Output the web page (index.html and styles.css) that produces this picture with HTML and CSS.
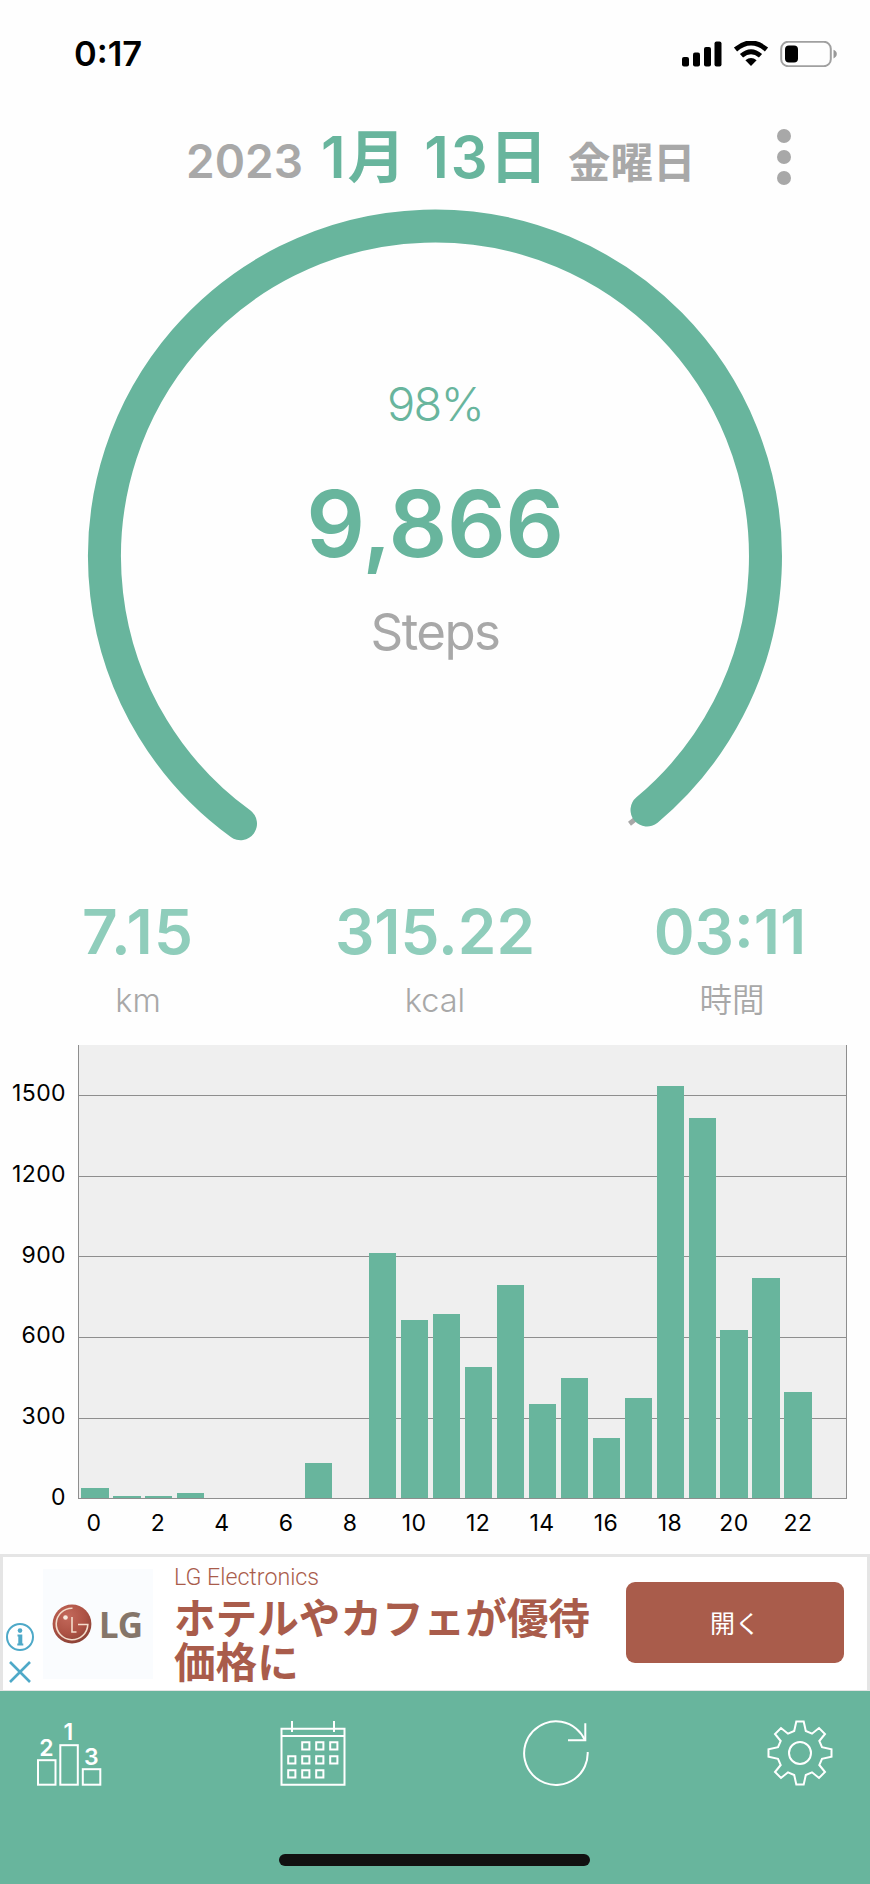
FILE: index.html
```html
<!DOCTYPE html>
<html lang="ja">
<head>
    <meta charset="UTF-8">
    <meta name="viewport" content="width=device-width, initial-scale=1.0">
    <title>Steps</title>
    <link rel="stylesheet" href="styles.css">
</head>
<body>
    <div class="statusbar">
        <span class="clock">0:17</span>
        <svg class="status-icons" width="156" height="26" viewBox="0 0 156 26">
            <rect x="0" y="16" width="7" height="9.5" rx="2"/>
            <rect x="11" y="11.5" width="7" height="14" rx="2"/>
            <rect x="22" y="6" width="7" height="19.5" rx="2"/>
            <rect x="32.5" y="0.5" width="7" height="25" rx="2"/>
            <path d="M53.5 8.5Q69 -4.5 84.5 8.5" fill="none" stroke="#000" stroke-width="5"/>
            <path d="M59.5 14.8Q69 6.5 78.5 14.8" fill="none" stroke="#000" stroke-width="4.8"/>
            <path d="M63.4 19.2Q69 15 74.6 19.2L69 25z"/>
            <rect x="99.2" y="0.8" width="49.6" height="24.4" rx="7" fill="none" stroke="#a0a0a0" stroke-width="2"/>
            <rect x="103" y="4.5" width="13" height="17" rx="4"/>
            <path d="M151.5 8.8Q154.8 10 154.8 13T151.5 17.4z" fill="#999"/>
        </svg>
    </div>

    <div class="date-row">
        <span class="year">2023</span>
        <span class="day">1月 13日</span>
        <span class="weekday">金曜日</span>
        <svg class="more" width="14" height="56" viewBox="0 0 14 56">
            <circle cx="7" cy="7" r="7"/>
            <circle cx="7" cy="28" r="7"/>
            <circle cx="7" cy="49" r="7"/>
        </svg>
    </div>

    <div class="gauge">
        <svg class="ring" width="700" height="640" viewBox="85 207 700 640">
            <path d="M240.5 823.7A330.5 330.5 0 1 1 629.5 823.7" stroke="#a8a8a8" stroke-width="5"/>
            <path d="M240.5 823.7A330.5 330.5 0 1 1 647 810" stroke="#68b59d" stroke-width="33" stroke-linecap="round"/>
        </svg>
        <div class="percent">98%</div>
        <div class="steps">9,866</div>
        <div class="steps-label">Steps</div>
    </div>

    <div class="stats">
        <div class="stat"><div class="value">7.15</div><div class="unit">km</div></div>
        <div class="stat"><div class="value">315.22</div><div class="unit">kcal</div></div>
        <div class="stat"><div class="value">03:11</div><div class="unit">時間</div></div>
    </div>

    <div class="chart">
        <div class="y-axis">
            <span>1500</span><span>1200</span><span>900</span><span>600</span><span>300</span><span>0</span>
        </div>
        <div class="plot">
            <div class="lines"><i></i><i></i><i></i><i></i><i></i></div>
            <div class="bars">
                <b style="height:10.5px"></b>
                <b style="height:2.5px"></b>
                <b style="height:2px"></b>
                <b style="height:5.5px"></b>
                <b style="height:0"></b>
                <b style="height:0"></b>
                <b style="height:0"></b>
                <b style="height:35px"></b>
                <b style="height:0"></b>
                <b style="height:245px"></b>
                <b style="height:178px"></b>
                <b style="height:184px"></b>
                <b style="height:131.5px"></b>
                <b style="height:213px"></b>
                <b style="height:94px"></b>
                <b style="height:120px"></b>
                <b style="height:60px"></b>
                <b style="height:100px"></b>
                <b style="height:412px"></b>
                <b style="height:380px"></b>
                <b style="height:168.5px"></b>
                <b style="height:220px"></b>
                <b style="height:106px"></b>
                <b style="height:0"></b>
            </div>
        </div>
        <div class="x-axis">
            <span>0</span><span>2</span><span>4</span><span>6</span><span>8</span><span>10</span>
            <span>12</span><span>14</span><span>16</span><span>18</span><span>20</span><span>22</span>
        </div>
    </div>

    <div class="ad">
        <div class="ad-choices">
            <svg width="28" height="28" viewBox="0 0 28 28">
                <circle cx="14" cy="14" r="13" fill="none" stroke="#4ea9c8" stroke-width="2"/>
                <circle cx="14" cy="7.6" r="2.3" fill="#4ea9c8"/>
                <path d="M11.5 11.5h4.8v9h1v2h-6v-2h1v-7h-.8z" fill="#4ea9c8"/>
            </svg>
            <svg width="28" height="24" viewBox="0 0 28 24">
                <path d="M4 2L24 22M24 2L4 22" stroke="#4ea9c8" stroke-width="2.6"/>
            </svg>
        </div>
        <div class="ad-logo">
            <svg width="40" height="40" viewBox="0 0 40 40">
                <defs>
                    <radialGradient id="face" cx="0.4" cy="0.3" r="0.75">
                        <stop offset="0" stop-color="#c3695b"/>
                        <stop offset="0.6" stop-color="#ad5244"/>
                        <stop offset="1" stop-color="#874035"/>
                    </radialGradient>
                </defs>
                <circle cx="20" cy="20" r="19.4" fill="url(#face)"/>
                <g fill="none" stroke="#f3dccb" stroke-width="1.6">
                    <path d="M20.5 4.2A15.8 15.8 0 1 0 35.8 20.5H26"/>
                    <path d="M20 13V28H24.5"/>
                </g>
                <circle cx="13.5" cy="13.5" r="2.3" fill="#f8e9dd"/>
            </svg>
            <span>LG</span>
        </div>
        <div class="ad-text">
            <div class="advertiser">LG Electronics</div>
            <div class="headline">ホテルやカフェが優待<br>価格に</div>
        </div>
        <div class="ad-button">開く</div>
    </div>

    <div class="tabbar">
        <div class="tabs">
            <svg width="66" height="66" viewBox="0 0 66 66">
                <rect x="2" y="40.2" width="17.5" height="24.5"/>
                <rect x="24.3" y="25.2" width="17.5" height="39.5"/>
                <rect x="46.8" y="49.2" width="17.5" height="15.5"/>
                <g class="place">
                    <text x="32.3" y="20.2">1</text>
                    <text x="10.5" y="36">2</text>
                    <text x="55.2" y="45.3">3</text>
                </g>
            </svg>
            <svg width="66" height="66" viewBox="0 0 66 66">
                <path d="M1.5 8.8H64.5V64.7H1.5zM1.5 16H64.5M12 1V12M54 1V12"/>
                <path d="M22.2 22.2h7.2v7.2h-7.2zM36.2 22.2h7.2v7.2h-7.2zM50.2 22.2h7.2v7.2h-7.2zM8.2 36.2h7.2v7.2h-7.2zM22.2 36.2h7.2v7.2h-7.2zM36.2 36.2h7.2v7.2h-7.2zM50.2 36.2h7.2v7.2h-7.2zM8.2 50.2h7.2v7.2h-7.2zM22.2 50.2h7.2v7.2h-7.2zM36.2 50.2h7.2v7.2h-7.2z"/>
            </svg>
            <svg width="66" height="66" viewBox="0 0 66 66">
                <path d="M64.7 32A31.8 31.8 0 1 1 62 20.3"/>
                <path d="M62.3 3.2V20.3H45"/>
            </svg>
            <svg width="66" height="66" viewBox="-33 -33 66 66">
                <path d="M-3.7-31.5H3.7L5.8-22L12-19.3L19-25L25-19L19.3-12L22-5.8L31.5-3.7V3.7L22 5.8L19.3 12L25 19L19 25L12 19.3L5.8 22L3.7 31.5H-3.7L-5.8 22L-12 19.3L-19 25L-25 19L-19.3 12L-22 5.8L-31.5 3.7V-3.7L-22-5.8L-19.3-12L-25-19L-19-25L-12-19.3L-5.8-22z"/>
                <circle r="11"/>
            </svg>
        </div>
        <div class="home-indicator"></div>
    </div>
</body>
</html>
```
FILE: styles.css
```css
* {
    box-sizing: border-box;
}
body {
    margin: 0;
    width: 870px;
    height: 1884px;
    overflow: hidden;
    background-color: #fefefe;
    color: #000;
    font-family: Inter, "Noto Sans CJK JP", sans-serif;
    display: flex;
    flex-direction: column;
}

.statusbar {
    height: 107px;
    display: flex;
    align-items: center;
    justify-content: space-between;
    padding: 0 32px 0 74px;
}
.clock {
    font-size: 34.5px;
    font-weight: 600;
}

.date-row {
    height: 100px;
    display: flex;
    align-items: baseline;
    line-height: 100px;
    padding-left: 186px;
    white-space: nowrap;
    color: #a8a8a8;
    font-weight: 600;
}
.year {
    width: 135px;
    font-size: 46px;
}
.day {
    width: 247px;
    font-size: 58px;
    letter-spacing: 2px;
    color: #68b59d;
}
.weekday {
    font-size: 42.5px;
    width: 209px;
}
.more {
    fill: #a8a8a8;
    align-self: center;
}

.gauge {
    height: 640px;
    position: relative;
    text-align: center;
    padding-top: 157px;
}
.ring {
    position: absolute;
    left: 85px;
    top: 0;
    fill: none;
}
.percent {
    font-size: 47px;
    font-weight: 350;
    line-height: 80px;
    letter-spacing: -1.6px;
    color: #68b59d;
}
.steps {
    font-size: 92px;
    font-weight: 600;
    line-height: 160px;
    letter-spacing: -0.5px;
    color: #68b59d;
}
.steps-label {
    font-size: 51px;
    line-height: 55px;
    letter-spacing: -1.6px;
    color: #a8a8a8;
}

.stats {
    height: 198px;
    display: flex;
    justify-content: space-between;
    padding: 44px 42px 0;
}
.stat {
    width: 192px;
    display: flex;
    flex-direction: column;
    align-items: center;
}
.value {
    font-size: 62px;
    font-weight: 600;
    line-height: 82px;
    color: #8fcdbb;
}
.stat:first-child .value {
    letter-spacing: 1.2px;
}
.stat:last-child .value {
    margin-left: -4px;
}
.unit {
    font-size: 32.5px;
    font-weight: 350;
    line-height: 56px;
    color: #a8a8a8;
}

.chart {
    height: 509px;
    display: grid;
    grid-template-columns: 78px 769px;
    grid-template-rows: 454px 55px;
    font-size: 23px;
    letter-spacing: 0.4px;
}
.y-axis {
    display: flex;
    flex-direction: column;
    text-align: right;
    padding: 8px 12px 0 0;
    line-height: 80.8px;
}
.plot {
    position: relative;
    background-color: #efefef;
    border: 1px solid #8e8e8e;
    border-top: none;
}
.lines i {
    display: block;
    height: 80.7px;
    border-bottom: 1px solid #8e8e8e;
}
.lines i:first-child {
    height: 51px;
}
.bars {
    position: absolute;
    inset: 0;
    display: flex;
    align-items: flex-end;
}
.bars b {
    width: 27.2px;
    margin: 0 2.4px;
    background-color: #68b59d;
}
.x-axis {
    grid-column: 2;
    display: flex;
    line-height: 49px;
    text-align: center;
}
.x-axis span {
    width: 32px;
    margin-right: 32px;
}

.ad {
    height: 137px;
    display: flex;
    background-color: #fff;
    border: 3px solid #e5e5e5;
    border-bottom-width: 1px;
}
.ad-choices {
    width: 40px;
    padding: 66px 0 0 3px;
    display: flex;
    flex-direction: column;
    gap: 9px;
}
.ad-logo {
    width: 110px;
    height: 110px;
    margin-top: 12px;
    padding-left: 9px;
    background-color: #fafcfe;
    display: flex;
    align-items: center;
    gap: 7px;
    font-family: "Noto Sans", sans-serif;
    font-size: 35px;
    font-weight: 700;
    color: #85766a;
}
.ad-text {
    width: 452px;
    padding: 6px 0 0 21px;
    color: #a95c4b;
    white-space: nowrap;
}
.advertiser {
    font-family: Roboto, sans-serif;
    font-size: 23.2px;
    font-weight: 300;
    line-height: 28px;
    margin-bottom: 3px;
}
.headline {
    font-family: "Noto Sans CJK JP", sans-serif;
    font-size: 41.6px;
    font-weight: 700;
    line-height: 44px;
}
.ad-button {
    width: 218px;
    height: 81px;
    margin: 25px 0 0 21px;
    border-radius: 9px;
    background-color: #a95c4b;
    color: #fff;
    font-family: "Noto Sans CJK JP", sans-serif;
    font-size: 25px;
    line-height: 81px;
    text-align: center;
}

.tabbar {
    flex: 1;
    background-color: #68b59d;
    display: flex;
    flex-direction: column;
    align-items: center;
    justify-content: space-between;
    padding: 29px 37px 18px 36px;
}
.tabs {
    width: 100%;
    display: flex;
    justify-content: space-between;
    fill: none;
    stroke: #fff;
    stroke-width: 2;
}
.tabs svg {
    overflow: visible;
}
.place {
    fill: #fff;
    stroke: none;
    font-size: 23px;
    font-weight: 600;
    text-anchor: middle;
}
.home-indicator {
    width: 311px;
    height: 12px;
    border-radius: 6px;
    background-color: #111;
}
```
